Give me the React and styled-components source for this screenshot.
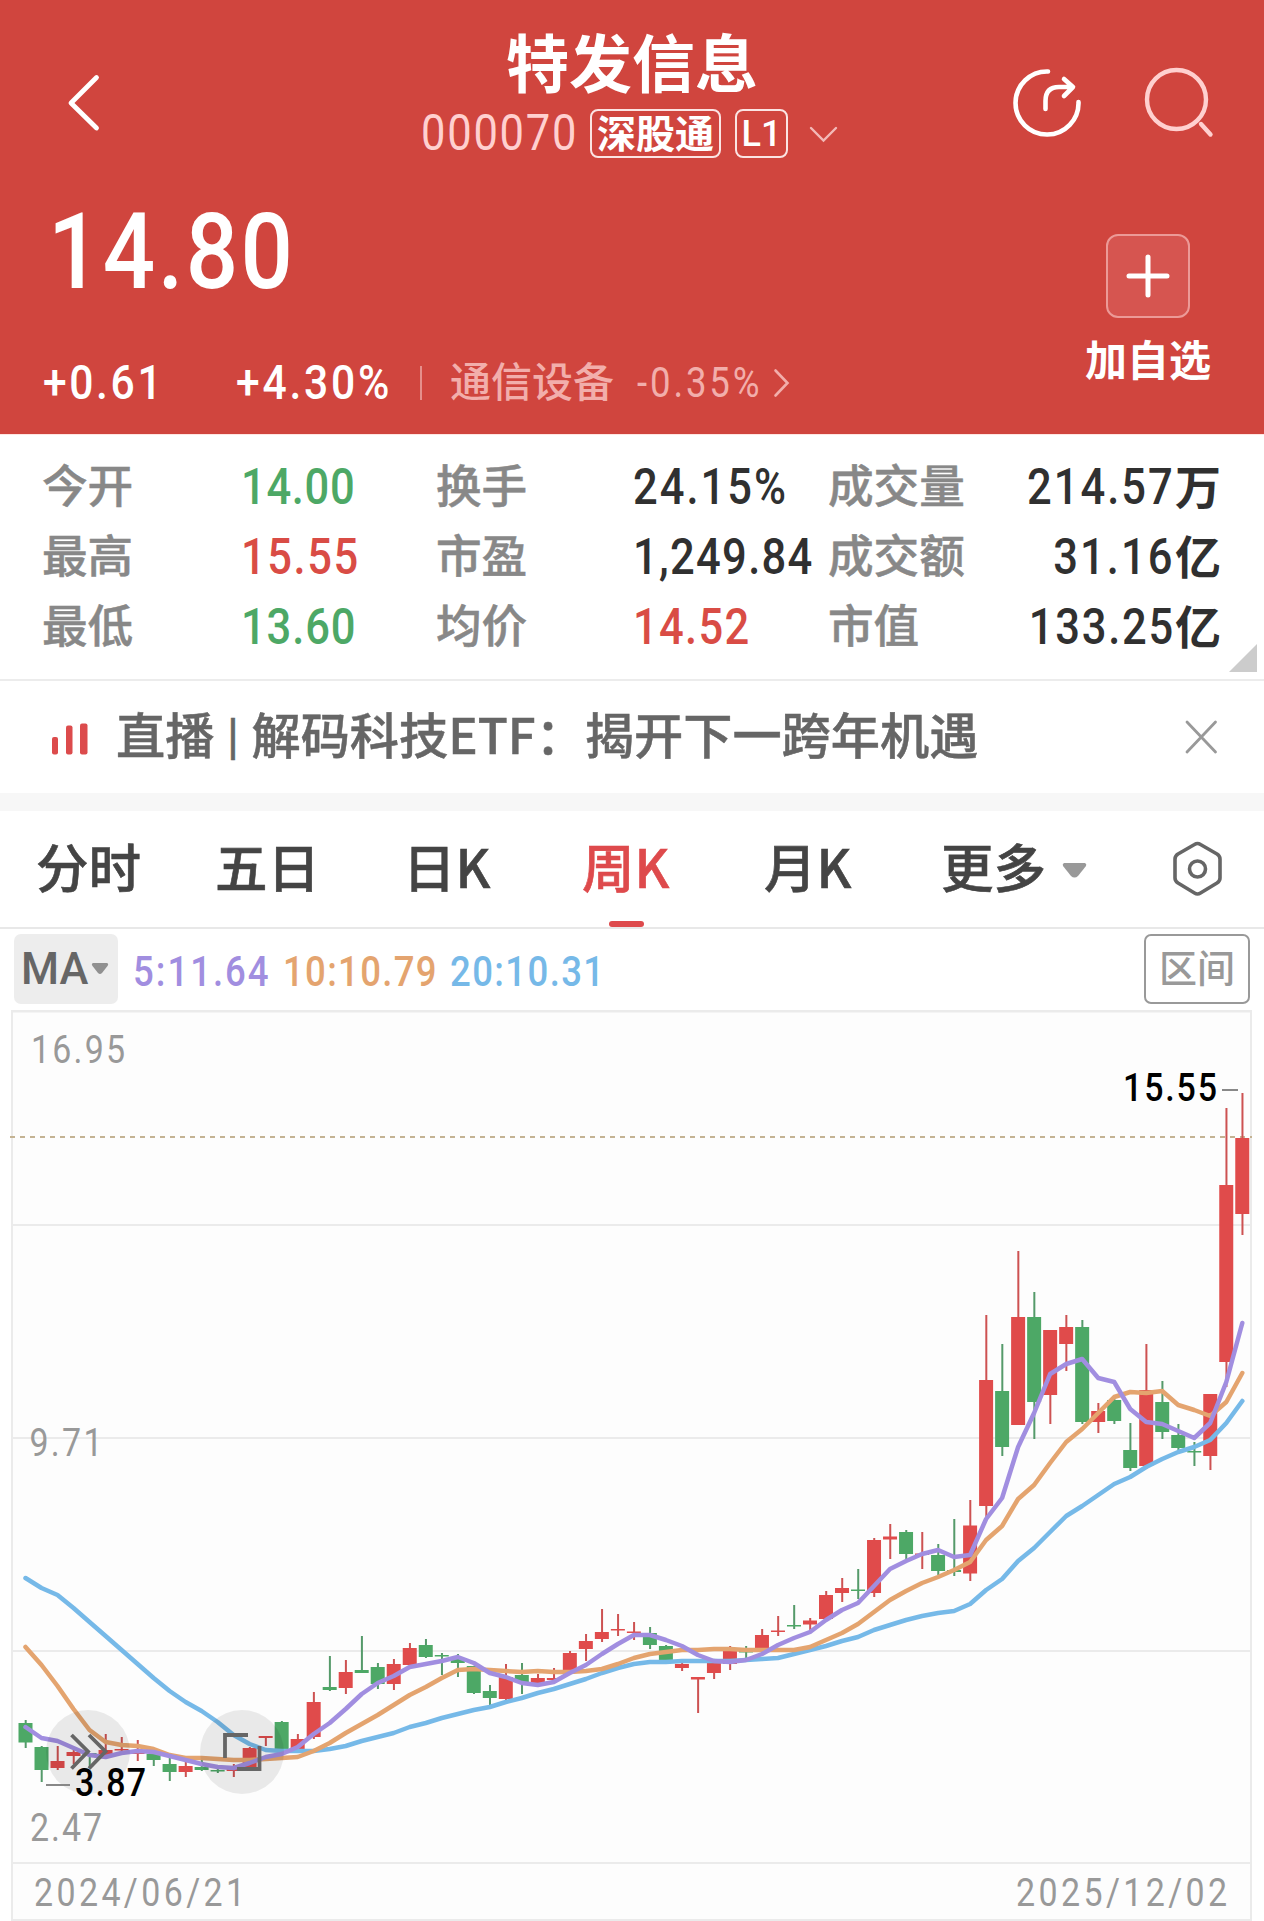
import React from 'react';
import styled, { createGlobalStyle } from 'styled-components';

const GlobalStyle = createGlobalStyle`
  * {
    box-sizing: border-box;
  }
  body {
    margin: 0;
    background: #fff;
  }
`

const numberFont = `Roboto, 'Noto Sans CJK SC', sans-serif`
const textFont = `'Noto Sans CJK SC', sans-serif`

const RED = '#e04b4b'
const GREEN = '#4da866'

// digits are drawn narrow with open tracking
const SQUEEZE = 0.87

const Page = styled.div`
  width: 1264px;
  height: 1921px;
  overflow: hidden;
  background: #fff;
  font-family: ${textFont};
`
const Num = styled.span`
  display: inline-block;
  transform: scaleX(${SQUEEZE});
  transform-origin: ${(props) => (props.$right ? 'right' : 'left')} center;
  font-family: ${numberFont};
  letter-spacing: ${(props) => props.$spacing || 0}px;
  white-space: nowrap;
`

/* header */
const Header = styled.header`
  height: 434px;
  background: #d0453e;
  color: #fff;
`
const TopBar = styled.div`
  display: grid;
  grid-template-columns: 422px 420px 1fr;
  height: 166px;
`
const BackButton = styled.div`
  padding: 68px 0 0 62px;
`
const TitleBlock = styled.div`
  padding-top: 21px;
`
const Title = styled.h1`
  margin: 0;
  font-size: 63px;
  font-weight: 700;
  line-height: 77px;
  text-align: center;
`
const SubTitle = styled.div`
  display: flex;
  align-items: center;
  height: 49px;
  margin: 11px 0 0 -1px;
`
const Code = styled.span`
  width: 169px;
  font-family: ${numberFont};
  font-size: 50px;
  line-height: 49px;
  color: #ffd0cf;
`
const Tag = styled.span`
  display: flex;
  align-items: center;
  justify-content: center;
  width: ${(props) => props.$width}px;
  height: 49px;
  margin-right: ${(props) => props.$gap}px;
  padding-top: ${(props) => props.$top || 0}px;
  border: 2px solid #fbe4e3;
  border-radius: 8px;
  font-family: ${numberFont};
  font-size: ${(props) => props.$size}px;
  font-weight: ${(props) => props.$weight};
  line-height: 45px;
  white-space: nowrap;
`
const Actions = styled.div`
  display: flex;
  gap: 58px;
  padding: 64px 0 0 167px;
`
const Quote = styled.div`
  display: flex;
  justify-content: space-between;
  height: 268px;
`
const Price = styled.div`
  padding: 31px 0 0 48px;
  font-family: ${numberFont};
  font-size: 106px;
  font-weight: 500;
  line-height: 110px;
`
const ChangeRow = styled.div`
  display: flex;
  align-items: center;
  height: 60px;
  margin: 46px 0 0 43px;
  font-family: ${numberFont};
  line-height: 60px;
`
const Change = styled.span`
  width: ${(props) => props.$width}px;
  font-size: 49px;
  font-weight: 500;
`
const Divider = styled.span`
  width: 2px;
  height: 34px;
  margin-right: 28px;
  background: #e58f8b;
`
const Sector = styled.span`
  width: 187px;
  font-size: 41px;
  font-weight: 500;
  color: #f2aeab;
`
const SectorChange = styled.span`
  width: 136px;
  font-size: 42px;
  color: #f2aeab;
`
const AddBlock = styled.div`
  display: flex;
  flex-direction: column;
  align-items: center;
  width: 132px;
  margin-right: 50px;
  padding-top: 68px;
`
const AddButton = styled.div`
  display: flex;
  align-items: center;
  justify-content: center;
  width: 84px;
  height: 84px;
  border: 2px solid #ec9a97;
  border-radius: 12px;
  background: #d65550;
`
const AddLabel = styled.div`
  margin-top: 15px;
  font-size: 42px;
  font-weight: 700;
  line-height: 50px;
`

/* key figures */
const Stats = styled.section`
  position: relative;
  display: grid;
  grid-template-columns: 199px 195px 197px 195px 150px 243px;
  grid-auto-rows: 70px;
  height: 247px;
  padding: 17px 0 0 42px;
  border-top: 1px solid #ffe6e2;
  border-bottom: 2px solid #ececec;
  font-family: ${numberFont};
  line-height: 70px;
  white-space: nowrap;
`
const StatLabel = styled.span`
  padding-top: 1px;
  font-size: 45.600px;
  font-weight: 500;
  color: #888;
  -webkit-text-stroke: 0.5px #888;
`
const StatValue = styled.span`
  font-size: 50px;
  font-weight: 500;
  color: ${(props) => props.$color || '#303030'};
  text-align: ${(props) => (props.$right ? 'right' : 'left')};
`
const Unit = styled.span`
  font-size: 46px;
  font-weight: 700;
`
const Corner = styled.i`
  position: absolute;
  right: 7px;
  bottom: 7px;
  width: 28px;
  height: 28px;
  background: #ccc;
  clip-path: polygon(100% 0, 100% 100%, 0 100%);
`

/* live banner */
const Banner = styled.section`
  display: flex;
  align-items: center;
  height: 130px;
  padding: 0 45px 8px 50px;
  border-bottom: 18px solid #f7f7f7;
`
const BannerText = styled.span`
  flex: 1;
  margin-left: 26px;
  font-size: 49.200px;
  font-weight: 500;
  line-height: 62px;
  white-space: nowrap;
  color: #666;
  -webkit-text-stroke: 0.5px #666;
`
const Bar = styled.span`
  margin: 0 2px;
  font-size: 37px;
  font-weight: 700;
  vertical-align: 5px;
  line-height: 1;
`

/* period tabs */
const Tabs = styled.nav`
  display: grid;
  grid-template-columns: 179px 188px 179px 182px 177px 122px 109px 54px;
  height: 118px;
  padding-left: 36px;
  border-bottom: 2px solid #e8e8e8;
`
const Tab = styled.span`
  position: relative;
  justify-self: start;
  font-size: 52.500px;
  font-weight: 500;
  line-height: 109px;
  white-space: nowrap;
  color: ${(props) => (props.$active ? '#de4a4c' : '#444')};
  -webkit-text-stroke: 0.6px ${(props) => (props.$active ? '#de4a4c' : '#444')};

  &::after {
    content: '';
    display: ${(props) => (props.$active ? 'block' : 'none')};
    position: absolute;
    left: 27px;
    bottom: 0;
    width: 35px;
    height: 6px;
    border-radius: 3px;
    background: #de4a4c;
  }
`
const TabIcon = styled.span`
  margin-left: -1px;
  padding-top: ${(props) => props.$top}px;
  line-height: 0;
`

/* moving averages */
const Indicators = styled.div`
  display: grid;
  grid-template-columns: 119px 150px 167px 1fr 106px;
  height: 81px;
  padding: 5px 14px 0;
`
const MaButton = styled.div`
  display: flex;
  align-items: center;
  gap: 3px;
  width: 104px;
  height: 70px;
  padding-left: 7px;
  border-radius: 7px;
  background: #ededed;
  font-family: ${numberFont};
  font-size: 43.500px;
  font-weight: 500;
  color: #666;
`
const MaValue = styled.span`
  font-family: ${numberFont};
  font-size: 42px;
  font-weight: 500;
  line-height: 75px;
  color: ${(props) => props.$color};
`
const RangeButton = styled.div`
  height: 70px;
  border: 2px solid #999;
  border-radius: 7px;
  font-family: ${numberFont};
  font-size: 38px;
  font-weight: 500;
  line-height: 67px;
  text-align: center;
  color: #999;
`

/* chart */
const Chart = styled.svg`
  display: block;
`
const AxisText = styled.text`
  font-family: ${numberFont};
  font-size: 39px;
  font-weight: ${(props) => (props.$dark ? 500 : 400)};
  fill: ${(props) => (props.$dark ? '#000' : '#999')};
`
const DateAxis = styled.div`
  display: flex;
  justify-content: space-between;
  height: 59px;
  margin: 0 12px 0 11px;
  padding: 0 19px 0 21px;
  border: 2px solid #ebebeb;
  background: #fdfdfd;
  font-size: 39px;
  line-height: 58px;
  color: #999;
`

// label, value, tracking, colour, unit
const stats = [
  ['今开', '14.00', 0.8, GREEN], ['换手', '24.15%', 2.3], ['成交量', '214.57', 2.3, null, '万'],
  ['最高', '15.55', 1.8, '#d94c45'], ['市盈', '1,249.84', 1.5], ['成交额', '31.16', 2.4, null, '亿'],
  ['最低', '13.60', 1, GREEN], ['均价', '14.52', 1.5, '#d94c45'], ['市值', '133.25', 2, null, '亿'],
]

// direction (1 = up), body top, body bottom, high, low
const candles = [
  [0, 1723, 1742.5, 1720, 1748], [0, 1747, 1770, 1746, 1782], [1, 1761, 1768, 1746, 1770],
  [1, 1752, 1756, 1750, 1764], [0, 1753, 1755, 1753, 1768], [1, 1750, 1756, 1734, 1758],
  [1, 1749, 1750.5, 1737, 1753], [1, 1752, 1754, 1740, 1761], [0, 1754, 1760, 1753, 1766],
  [0, 1764, 1772, 1758, 1781], [1, 1766, 1772, 1761, 1777], [0, 1767, 1770, 1760, 1771],
  [0, 1770, 1771, 1768, 1773], [1, 1769, 1771, 1764, 1777], [1, 1748, 1767, 1747, 1768],
  [1, 1736, 1738, 1736, 1746], [0, 1722, 1752, 1721, 1752], [1, 1739, 1749, 1734, 1750],
  [1, 1702, 1737, 1692, 1739], [0, 1687, 1690, 1656, 1691], [1, 1672, 1688, 1660, 1694],
  [0, 1670, 1673, 1636, 1673], [0, 1667, 1684, 1663, 1689], [1, 1664, 1684, 1659, 1690],
  [1, 1648, 1665, 1643, 1665], [0, 1645, 1657, 1639, 1658], [0, 1655, 1656.5, 1653, 1675],
  [0, 1659, 1663, 1654, 1677], [0, 1666, 1693, 1666, 1694], [0, 1691, 1698, 1685, 1705],
  [1, 1677, 1699, 1664, 1700], [0, 1675, 1682, 1663, 1694], [1, 1678, 1683, 1674, 1685],
  [1, 1678, 1680, 1668, 1680], [1, 1653, 1671, 1651, 1671], [1, 1641, 1649, 1634, 1661],
  [1, 1632, 1639, 1609, 1642], [1, 1629, 1630.5, 1614, 1636], [1, 1631.5, 1633, 1622, 1640],
  [0, 1633, 1645, 1627, 1649], [0, 1646, 1660, 1645, 1664], [1, 1664, 1668, 1663, 1671],
  [1, 1677, 1679.5, 1677, 1713], [1, 1663, 1673, 1662, 1679], [1, 1651, 1664, 1646, 1670],
  [0, 1651, 1652, 1646, 1660], [1, 1635, 1649, 1629, 1649], [1, 1630.5, 1632, 1616, 1636],
  [0, 1625, 1626.5, 1605, 1629], [1, 1620.5, 1624.5, 1618, 1630], [1, 1595, 1619, 1591, 1619],
  [1, 1588, 1593, 1578, 1602], [0, 1589.5, 1591, 1569, 1599], [1, 1540, 1593, 1538, 1597],
  [1, 1536.5, 1539.5, 1524, 1559], [0, 1532, 1554, 1530, 1560], [1, 1553.5, 1555, 1532, 1569],
  [0, 1555, 1571, 1544, 1575], [0, 1570, 1572, 1519, 1576], [1, 1525.5, 1573.5, 1500, 1581],
  [1, 1380, 1506, 1315, 1517], [0, 1391, 1447, 1344, 1456], [1, 1317, 1425, 1251, 1425],
  [0, 1317, 1402, 1292, 1439], [1, 1330, 1395, 1330, 1424], [1, 1327, 1344, 1315, 1371],
  [0, 1327, 1422, 1320, 1424], [1, 1411, 1422, 1403, 1433], [0, 1400, 1421, 1397, 1424],
  [0, 1450, 1468, 1423, 1471], [1, 1390, 1466, 1344, 1469], [0, 1402, 1432, 1381, 1439],
  [0, 1435, 1448, 1424, 1450], [0, 1451, 1452, 1442, 1466], [1, 1394, 1456, 1394, 1470],
  [1, 1185, 1362, 1108, 1387], [1, 1138, 1214, 1093, 1235],
]

const ma5 = [
  1727, 1738, 1741, 1748, 1755, 1757, 1753, 1751, 1752, 1756, 1760, 1764, 1767, 1768, 1763, 1757,
  1754, 1747, 1734, 1723, 1709, 1694, 1683, 1676, 1667, 1664, 1661, 1657, 1663, 1673, 1677, 1683,
  1685, 1682, 1673, 1665, 1654, 1644, 1635, 1635, 1640, 1646, 1655, 1661, 1662, 1660, 1654, 1645,
  1638, 1632, 1620, 1610, 1603, 1586, 1569, 1561, 1554, 1550, 1557, 1555, 1519, 1498, 1447, 1413,
  1374, 1364, 1359, 1378, 1382, 1409, 1422, 1424, 1431, 1438, 1423, 1382, 1323,
]
const ma10 = [
  1647, 1665, 1686, 1709, 1730, 1742, 1745, 1746, 1749, 1755, 1758, 1758, 1759, 1760, 1760, 1759,
  1758, 1757, 1751, 1743, 1733, 1724, 1715, 1705, 1695, 1687, 1678, 1670, 1669, 1670, 1671, 1672,
  1671, 1672, 1672, 1671, 1669, 1664, 1658, 1654, 1652, 1650, 1650, 1649, 1649, 1650, 1650, 1650,
  1650, 1647, 1640, 1633, 1624, 1612, 1600, 1591, 1583, 1577, 1570, 1562, 1540, 1526, 1499, 1485,
  1463, 1442, 1429, 1413, 1397, 1392, 1393, 1391, 1405, 1410, 1416, 1402, 1373,
]
const ma20 = [
  1578, 1588, 1595, 1608, 1622, 1636, 1650, 1664, 1678, 1691, 1702, 1711, 1722, 1735, 1744, 1750,
  1751, 1751, 1751, 1749, 1746, 1741, 1737, 1733, 1727, 1723, 1718, 1714, 1710, 1707, 1702, 1698,
  1693, 1689, 1684, 1679, 1673, 1668, 1664, 1662, 1662, 1661, 1661, 1661, 1661, 1660, 1659, 1658,
  1654, 1650, 1646, 1641, 1637, 1630, 1625, 1620, 1616, 1613, 1611, 1604, 1590, 1579, 1561, 1548,
  1532, 1516, 1506, 1495, 1484, 1477, 1467, 1459, 1452, 1447, 1440, 1423, 1401,
]

const xOf = (i) => 25.5 + i * 16.01
const toPoints = (values) => values.map((y, i) => `${xOf(i).toFixed(1)},${y}`).join(' ')

const Candle = ({ index, data }) => {
  const [up, top, bottom, high, low] = data
  const color = up ? RED : GREEN
  return (
    <g>
      <rect x={xOf(index) - 0.8} y={high} width="2" height={low - high} fill={up ? '#cd5252' : '#559a6a'} />
      <rect x={xOf(index) - 7} y={top} width="14" height={Math.max(bottom - top, 1.5)} fill={color} />
    </g>
  )
}

const AxisLabel = ({ x, y, width, dark, children }) => (
  <AxisText $dark={dark} transform={`translate(${x} ${y}) scale(${SQUEEZE} 1)`} textLength={width / SQUEEZE}>
    {children}
  </AxisText>
)

const KLine = () => {
  return (
    <Chart width="1264" height="852" viewBox="0 1010 1264 852">
      <rect x="12" y="1011" width="1239" height="852" fill="#fdfdfd" />
      <g fill="#ebebeb">
        <rect x="11" y="1010" width="1241" height="2.500" />
        <rect x="11" y="1010" width="2" height="853" />
        <rect x="1250" y="1010" width="2" height="853" />
        <rect x="12" y="1224" width="1239" height="2" />
        <rect x="12" y="1437" width="1239" height="2" />
        <rect x="12" y="1650" width="1239" height="2" />
      </g>
      <path d="M10 1137H1252" stroke="#c4b393" strokeWidth="2" strokeDasharray="5 5" />

      {candles.map((c, i) => <Candle key={i} index={i} data={c} />)}

      <g fill="none" strokeWidth="4.500" strokeLinejoin="round" strokeLinecap="round">
        <polyline points={toPoints(ma20)} stroke="#76b9e8" />
        <polyline points={toPoints(ma10)} stroke="#e4a46f" />
        <polyline points={toPoints(ma5)} stroke="#a18ee0" />
      </g>

      <g fill="#000" fillOpacity="0.08">
        <circle cx="88" cy="1752" r="42" />
        <circle cx="242" cy="1752" r="42" />
      </g>
      <g fill="none" stroke="#666" strokeWidth="3.800">
        <path d="M71.500 1735L88 1751.500L71.500 1768.500M89 1735L105.500 1751.500L89 1768.500" />
        <path d="M225 1758V1735H248M237 1769H259.500V1746" />
      </g>

      <AxisLabel x={31} y={1063} width={94}>16.95</AxisLabel>
      <AxisLabel x={29.5} y={1456} width={73}>9.71</AxisLabel>
      <AxisLabel x={30} y={1841} width={72}>2.47</AxisLabel>
      <path d="M46 1785H70M1222 1090H1238" stroke="#888" strokeWidth="2" />
      <AxisLabel dark x={75} y={1796} width={71}>3.87</AxisLabel>
      <AxisLabel dark x={1123} y={1101} width={94}>15.55</AxisLabel>
    </Chart>
  )
}

const App = () => {
  return (
    <Page>
      <GlobalStyle />
      <Header>
        <TopBar>
          <BackButton>
            <svg width="44" height="70" fill="none" stroke="#fff" strokeWidth="4.800" strokeLinecap="round" strokeLinejoin="round">
              <path d="M34.500 9.500L9 35L34.500 60" />
            </svg>
          </BackButton>
          <TitleBlock>
            <Title>特发信息</Title>
            <SubTitle>
              <Code><Num $spacing={2}>000070</Num></Code>
              <Tag $width={131} $gap={14} $size={39} $weight={700} $top={3}>深股通</Tag>
              <Tag $width={53} $gap={20} $size={36} $weight={500} $top={1}>L1</Tag>
              <svg width="32" height="20" fill="none" stroke="#f3b9b7" strokeWidth="2.400" strokeLinecap="round">
                <path d="M3 4L15.500 16.500L28 4" />
              </svg>
            </SubTitle>
          </TitleBlock>
          <Actions>
            <svg width="76" height="78" fill="none" stroke="#fff" strokeWidth="4.600" strokeLinecap="round" strokeLinejoin="round">
              <path d="M39 7.500A31.500 31.500 0 1 0 69.500 38" />
              <path d="M36.500 45V37Q36.500 23 50 23H63M55 15L64 23L55 32" />
            </svg>
            <svg width="74" height="78" fill="none" stroke="#ffd0cf" strokeWidth="4.400" strokeLinecap="round">
              <circle cx="33.500" cy="35.500" r="29.500" />
              <path d="M58 60L67.500 70.500" />
            </svg>
          </Actions>
        </TopBar>
        <Quote>
          <div>
            <Price><Num $spacing={2.8}>14.80</Num></Price>
            <ChangeRow>
              <Change $width={193}><Num $spacing={3}>+0.61</Num></Change>
              <Change $width={184}><Num $spacing={3.2}>+4.30%</Num></Change>
              <Divider />
              <Sector>通信设备</Sector>
              <SectorChange><Num $spacing={3.3}>-0.35%</Num></SectorChange>
              <svg width="18" height="30" fill="none" stroke="#f2aeab" strokeWidth="2.600" strokeLinecap="round">
                <path d="M2.500 2.500L14.500 15L2.500 27.500" />
              </svg>
            </ChangeRow>
          </div>
          <AddBlock>
            <AddButton>
              <svg width="44" height="44" stroke="#fff" strokeWidth="5" strokeLinecap="round">
                <path d="M22 3V41M3 22H41" />
              </svg>
            </AddButton>
            <AddLabel>加自选</AddLabel>
          </AddBlock>
        </Quote>
      </Header>

      <Stats>
        {stats.map(([label, value, spacing, color, unit]) => (
          <React.Fragment key={label}>
            <StatLabel>{label}</StatLabel>
            <StatValue $color={color} $right={!!unit}>
              <Num $spacing={spacing} $right={!!unit}>{value}</Num>
              {unit && <Unit>{unit}</Unit>}
            </StatValue>
          </React.Fragment>
        ))}
        <Corner />
      </Stats>

      <Banner>
        <svg width="40" height="50" fill="#dc4b4c">
          <rect x="2" y="29" width="6" height="17.500" rx="2" />
          <rect x="16" y="17.500" width="6.500" height="29" rx="2" />
          <rect x="30" y="15.500" width="7.500" height="31" rx="2" />
        </svg>
        <BannerText>直播 <Bar>|</Bar> 解码科技ETF：揭开下一跨年机遇</BannerText>
        <svg width="36" height="50" stroke="#999" strokeWidth="2.800" strokeLinecap="round">
          <path d="M4 14L32.500 44M32.500 14L4 44" />
        </svg>
      </Banner>

      <Tabs>
        <Tab>分时</Tab>
        <Tab>五日</Tab>
        <Tab>日K</Tab>
        <Tab $active>周K</Tab>
        <Tab>月K</Tab>
        <Tab>更多</Tab>
        <TabIcon $top={50}>
          <svg width="26" height="20" fill="#999">
            <path d="M2 2H23Q25 3 24 5L16 15Q12.500 18 9 15L1 5Q0 3 2 2Z" />
          </svg>
        </TabIcon>
        <TabIcon $top={29}>
          <svg width="54" height="58" fill="none" stroke="#666" strokeWidth="3.600" strokeLinejoin="round">
            <path d="M23.500 4.500Q26.500 2.500 29.500 4.500L46 14Q49 16 49 19V38Q49 41 46 43L29.500 53Q26.500 55 23.500 53L7 43Q4 41 4 38V19Q4 16 7 14Z" />
            <circle cx="26.500" cy="29" r="8" />
          </svg>
        </TabIcon>
      </Tabs>

      <Indicators>
        <MaButton>
          MA
          <svg width="18" height="14" fill="#909090">
            <path d="M2 1H16Q18 2 16.500 4L11 11Q9 13 7 11L1.500 4Q0 2 2 1Z" />
          </svg>
        </MaButton>
        <MaValue $color="#a18ee0"><Num $spacing={2.3}>5:11.64</Num></MaValue>
        <MaValue $color="#e4a46f"><Num $spacing={1.5}>10:10.79</Num></MaValue>
        <MaValue $color="#76b9e8"><Num $spacing={1.6}>20:10.31</Num></MaValue>
        <RangeButton>区间</RangeButton>
      </Indicators>

      <KLine />
      <DateAxis>
        <Num $spacing={3.9}>2024/06/21</Num>
        <Num $spacing={3.9} $right>2025/12/02</Num>
      </DateAxis>
    </Page>
  )
}

export default App
